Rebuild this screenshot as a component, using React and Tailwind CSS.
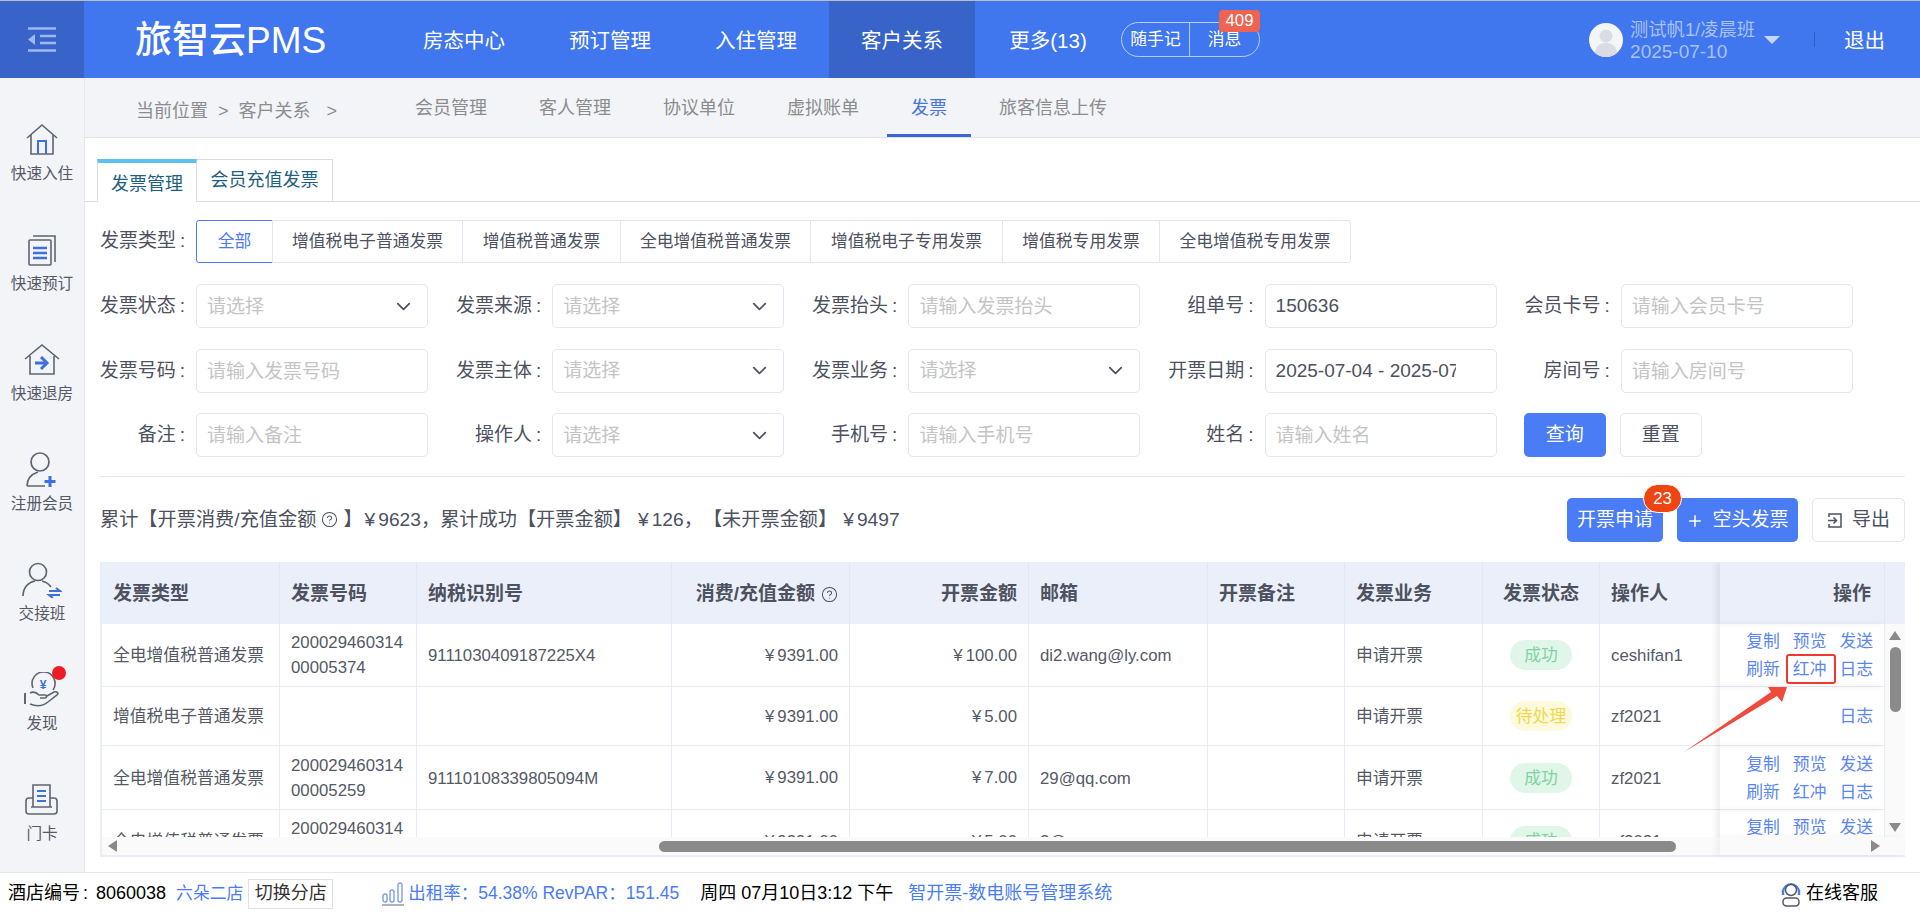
import React from 'react';
import { ChevronDown, CircleHelp, Plus } from 'lucide-react';

const navItems = ['房态中心', '预订管理', '入住管理', '客户关系', '更多(13)'];
const subItems = ['会员管理', '客人管理', '协议单位', '虚拟账单', '发票', '旅客信息上传'];
const typeItems = [
  ['全部', 'w-[77px]'],
  ['增值税电子普通发票', 'w-[191px]'],
  ['增值税普通发票', 'w-[159px]'],
  ['全电增值税普通发票', 'w-[191px]'],
  ['增值税电子专用发票', 'w-[193px]'],
  ['增值税专用发票', 'w-[158px]'],
  ['全电增值税专用发票', 'w-[192px]'],
];

const stroke = '#5f6472';
const blue = '#3f6fe0';

const HomeIcon = () => (
  <svg width="34" height="34" viewBox="0 0 34 34" fill="none" stroke={stroke} strokeWidth="1.6">
    <path d="M2 15 17 2l15 13M6 12v19h22V12" />
    <path d="M13 31V18h8v13" stroke={blue} strokeWidth="2" />
  </svg>
);

const BookIcon = () => (
  <svg width="34" height="34" viewBox="0 0 34 34" fill="none" stroke={stroke} strokeWidth="1.6">
    <path d="M8 3h22v26" />
    <rect x="4" y="7" width="22" height="25" rx="1" />
    <path d="M8 15h14M8 20h14M8 25h14" stroke={blue} strokeWidth="2.4" />
  </svg>
);

const CheckoutIcon = () => (
  <svg width="36" height="34" viewBox="0 0 36 34" fill="none" stroke={stroke} strokeWidth="1.6">
    <path d="M1 16 18 2l17 14M6 13v18h24V13" />
    <path d="M11 20h11" stroke={blue} strokeWidth="3" />
    <path d="M17 14l6 6-6 6" stroke={blue} strokeWidth="3" />
  </svg>
);

const MemberIcon = () => (
  <svg width="34" height="36" viewBox="0 0 34 36" fill="none" stroke={stroke} strokeWidth="1.7">
    <circle cx="15" cy="10" r="9" />
    <path d="M2 34c0-8 5-12 11-14M2 34h18" />
    <path d="M25 24v11M19.500 29.500h11" stroke={blue} strokeWidth="3" />
  </svg>
);

const ShiftIcon = () => (
  <svg width="40" height="36" viewBox="0 0 40 36" fill="none" stroke={stroke} strokeWidth="1.7">
    <circle cx="16" cy="10" r="8.500" />
    <path d="M1 34c0-9 6-14 12-15M20 19c4 1 7 3 9 6" />
    <path d="M27 29h11l-4-3M38 33H27l4 3" stroke={blue} strokeWidth="2" />
  </svg>
);

const FindIcon = () => (
  <svg width="36" height="36" viewBox="0 0 36 36" fill="none" stroke={stroke} strokeWidth="1.6">
    <path d="M9 16a11.500 11.500 0 1 1 20 2" />
    <text x="19" y="17" fontSize="12" fontWeight="700" fill={blue} stroke="none" textAnchor="middle">¥</text>
    <path d="M1 21v11" strokeWidth="2" />
    <path d="M6 21c4-2 7 0 9 2h6c2 0 2 3 0 3h-5M6 32c7 3 13 2 18-2l9-7c2-2 0-4-3-3l-7 4" />
  </svg>
);

const CardIcon = () => (
  <svg width="34" height="34" viewBox="0 0 34 34" fill="none" stroke={stroke} strokeWidth="1.6">
    <path d="M8 24V2h17v22" />
    <path d="M12 8h9M12 13h9M12 18h9" stroke={blue} strokeWidth="1.800" />
    <path d="M8 15H4a3 3 0 0 0-3 3v10a3 3 0 0 0 3 3h25a3 3 0 0 0 3-3V18a3 3 0 0 0-3-3h-4M6 24h21" />
  </svg>
);

const sideItems = [
  ['快速入住', HomeIcon],
  ['快速预订', BookIcon],
  ['快速退房', CheckoutIcon],
  ['注册会员', MemberIcon],
  ['交接班', ShiftIcon],
  ['发现', FindIcon],
  ['门卡', CardIcon],
];

const Yuan = () => <span className="mr-[3px]">¥</span>;

const Select = () => (
  <div className="h-[44px] w-[232px] flex items-center justify-between pl-[10px] pr-[12px] border border-[#e3e5ef] rounded-[5px] bg-white">
    <span className="pt-[2px] text-[19px] text-[#c4c4c4]">请选择</span>
    <ChevronDown size={23} strokeWidth={1.800} className="text-[#4d5160]" />
  </div>
);

const Input = ({ placeholder, value }) => (
  <input
    readOnly
    placeholder={placeholder}
    value={value || ''}
    className={`h-[44px] w-[232px] pl-[10px] border border-[#e3e5ef] rounded-[5px] bg-white text-[19px] text-[#4d5160] placeholder:text-[#c4c4c4] outline-none ${value ? 'pr-[40px] text-[18px]' : 'pr-[11px] pt-[2px]'}`}
  />
);

const Field = ({ label, children }) => (
  <div className="flex items-center">
    <label className="w-[89px] mr-[11px] pt-[1px] text-right text-[19px] text-[#4d5160] whitespace-nowrap">
      {label}
      <span className="ml-[4px]">:</span>
    </label>
    {children}
  </div>
);

const colWidths = [178, 137, 255, 178, 179, 179, 137, 138, 117, 120, 165];
const cell = 'border-r border-b border-[#e8ebf6] px-[11px] text-[16.800px] text-[#555966]';
const th = 'border-r border-[#e3e7f5] px-[11px] pt-[2px] bg-[#ebeffa] text-[19px] font-bold text-[#4d5160]';

const rows = [
  { h: 'h-[63px]', type: '全电增值税普通发票', no: ['200029460314', '00005374'], tax: '9111030409187225X4', amount: '100.00', mail: 'di2.wang@ly.com', status: 'ok', user: 'ceshifan1', red: true },
  { h: 'h-[59px]', type: '增值税电子普通发票', no: [], tax: '', amount: '5.00', mail: '', status: 'wait', user: 'zf2021', logOnly: true },
  { h: 'h-[64px]', type: '全电增值税普通发票', no: ['200029460314', '00005259'], tax: '91110108339805094M', amount: '7.00', mail: '29@qq.com', status: 'ok', user: 'zf2021' },
  { h: 'h-[63px]', type: '全电增值税普通发票', no: ['200029460314', '00005258'], tax: '', amount: '5.00', mail: '2@qq.com', status: 'ok', user: 'zf2021' },
];

const Ops = ({ row }) => {
  if (row.logOnly) return <div className="text-right text-[#5a86f5]">日志</div>;
  return (
    <div className="flex flex-wrap justify-end gap-x-[13px] leading-[28px] text-[#5a86f5]">
      <span>复制</span>
      <span>预览</span>
      <span>发送</span>
      <span>刷新</span>
      <span className="relative">
        红冲
        {row.red && <span className="absolute -left-[7px] -right-[10px] -top-[2px] bottom-0 border-2 border-[#ee3a2e] rounded-[3px]" />}
      </span>
      <span>日志</span>
    </div>
  );
};

const InvoiceTable = () => (
  <div className="relative w-[1805px] mt-[20px] border-l-2 border-b-2 border-[#e9edf8]">
    <div className="flex">
      <div className="h-[275px] w-[1783px] overflow-hidden">
        <table className="table-fixed w-[1783px] border-separate border-spacing-0">
          <colgroup>
            {colWidths.map((w, i) => (
              <col key={i} style={{ width: w }} />
            ))}
          </colgroup>
          <thead>
            <tr className="h-[62px]">
              <th className={`${th} text-left`}>发票类型</th>
              <th className={`${th} text-left`}>发票号码</th>
              <th className={`${th} text-left`}>纳税识别号</th>
              <th className={`${th} text-right`}>
                <span className="inline-flex items-center gap-[6px] whitespace-nowrap">
                  消费/充值金额
                  <CircleHelp size={17} strokeWidth={1.500} />
                </span>
              </th>
              <th className={`${th} text-right`}>开票金额</th>
              <th className={`${th} text-left`}>邮箱</th>
              <th className={`${th} text-left`}>开票备注</th>
              <th className={`${th} text-left`}>发票业务</th>
              <th className={`${th} text-center`}>发票状态</th>
              <th className={`${th} text-left border-r-0`}>操作人</th>
              <th className={`${th} text-right pr-[13px] shadow-[-4px_0_6px_rgba(0,0,0,0.07)]`}>操作</th>
            </tr>
          </thead>
          <tbody>
            {rows.map((row, i) => (
              <tr key={i} className={row.h}>
                <td className={`${cell} pt-[2px]`}>{row.type}</td>
                <td className={`${cell} leading-[25px]`}>
                  {row.no.map((n) => (
                    <div key={n}>{n}</div>
                  ))}
                </td>
                <td className={`${cell} pt-[2px]`}>{row.tax}</td>
                <td className={`${cell} pt-[1px] text-right`}><Yuan />9391.00</td>
                <td className={`${cell} pt-[1px] text-right`}><Yuan />{row.amount}</td>
                <td className={`${cell} pt-[2px]`}>{row.mail}</td>
                <td className={cell}></td>
                <td className={`${cell} pt-[2px]`}>申请开票</td>
                <td className={`${cell} text-center px-[0px]`}>
                  {row.status === 'ok' ? (
                    <span className="inline-block w-[62px] h-[30px] leading-[32px] rounded-full bg-[#dff6e8] text-[#7fd3a2]">成功</span>
                  ) : (
                    <span className="inline-block w-[62px] h-[30px] leading-[32px] rounded-full bg-[#fdf9dc] text-[#f0d94c] whitespace-nowrap">待处理</span>
                  )}
                </td>
                <td className={`${cell} pt-[2px] border-r-0`}>{row.user}</td>
                <td className={`${cell} pl-[0px] pr-[11px] pt-[2px] shadow-[-4px_0_6px_rgba(0,0,0,0.07)]`}>
                  <Ops row={row} />
                </td>
              </tr>
            ))}
          </tbody>
        </table>
      </div>
      {/* vertical scrollbar */}
      <div className="w-[20px] h-[275px] flex flex-col">
        <div className="h-[62px] bg-[#ebeffa] shrink-0" />
        <div className="flex-1 bg-[#fafafa] flex flex-col items-center pt-[7px]">
          <span className="w-0 h-0 border-x-[6px] border-x-transparent border-b-[9px] border-b-[#8a8a8a]" />
          <span className="w-[11px] h-[65px] mt-[7px] rounded-full bg-[#8a8a8a]" />
          <span className="w-0 h-0 mt-auto mb-[5px] border-x-[6px] border-x-transparent border-t-[9px] border-t-[#8a8a8a]" />
        </div>
      </div>
    </div>
    {/* horizontal scrollbar */}
    <div className="flex h-[18px] w-[1803px] bg-[#fafafa]">
      <div className="w-[1618px] flex items-center pl-[6px] relative">
        <span className="w-0 h-0 border-y-[6px] border-y-transparent border-r-[9px] border-r-[#8a8a8a]" />
        <span className="h-[11px] w-[1017px] ml-[542px] rounded-full bg-[#8a8a8a]" />
      </div>
      <div className="w-[185px] flex items-center justify-end pr-[25px] shadow-[-4px_0_6px_rgba(0,0,0,0.05)]">
        <span className="w-0 h-0 border-y-[6px] border-y-transparent border-l-[9px] border-l-[#8a8a8a]" />
      </div>
    </div>
    {/* annotation arrow */}
    <svg className="absolute left-[1582px] top-[125px]" width="104" height="66" viewBox="0 0 104 66">
      <polygon points="0,65 87,5 84,0 103,0 98,15 93,9" fill="#f04a3c" />
    </svg>
  </div>
);

export default function App() {
  return (
    <div
      className="w-[1920px] h-[912px] overflow-hidden flex flex-col bg-white"
      style={{ fontFamily: '"Liberation Sans", "Noto Sans CJK SC", sans-serif' }}
    >
      {/* header */}
      <header className="h-[78px] shrink-0 flex items-stretch bg-[#4076ee] border-t border-[#b9bcc2] text-white">
        <div className="w-[84px] flex items-center justify-center bg-[#3863c8]">
          <svg width="28" height="25" viewBox="0 0 28 25" fill="none" stroke="#9db8f2" strokeWidth="2.400">
            <path d="M0 1.500h28M12 9h16M12 16h16M0 23.500h28" />
            <path d="M7 7v11l-7-5.500z" fill="#9db8f2" stroke="none" />
          </svg>
        </div>
        <div className="w-[307px] pl-[51px] pt-[2px] flex items-center text-[37px] font-medium whitespace-nowrap">旅智云PMS</div>
        <nav className="flex">
          {navItems.map((item) => (
            <a key={item} className={`w-[146px] pt-[4px] flex items-center justify-center text-[20.500px] whitespace-nowrap ${item === '客户关系' ? 'bg-[#3863c8]' : ''}`}>
              {item}
            </a>
          ))}
        </nav>
        <div className="flex items-center">
          <div className="relative flex w-[139px] h-[35px] border border-[#b9cdf8] rounded-full text-[16.800px]">
            <span className="w-[68px] flex items-center justify-center border-r border-[#b9cdf8]">随手记</span>
            <span className="flex-1 flex items-center justify-center">消息</span>
            <span className="absolute left-[97px] -top-[13px] w-[41px] h-[22px] flex items-center justify-center rounded-[4px] bg-[#ee6450] text-[16.800px]">409</span>
          </div>
        </div>
        <div className="ml-auto flex items-center">
          <svg width="34" height="34" viewBox="0 0 34 34">
            <circle cx="17" cy="17" r="17" fill="#f4f5f7" />
            <circle cx="17" cy="13" r="6.500" fill="#d9dce2" />
            <path d="M6 30c1-8 6-10 11-10s10 2 11 10a17 17 0 0 1-22 0z" fill="#d9dce2" />
          </svg>
          <div className="ml-[7px] pt-[2px] leading-[22px] text-[#a9c1f5] whitespace-nowrap">
            <div className="text-[18.300px]">测试帆1/凌晨班</div>
            <div className="text-[19px]">2025-07-10</div>
          </div>
          <span className="ml-[9px] w-0 h-0 border-x-[8px] border-x-transparent border-t-[8px] border-t-[#c8d7f8]" />
          <span className="ml-[34px] w-px h-[15px] bg-[#2f5bc4]" />
          <a className="ml-[29px] mr-[35px] pt-[4px] text-[20.500px]">退出</a>
        </div>
      </header>

      <div className="flex-1 flex min-h-0">
        {/* side bar */}
        <aside className="w-[85px] shrink-0 pt-[44px] bg-[#f2f4f8] border-r border-[#e4e7ee] overflow-hidden">
          {sideItems.map(([label, Icon]) => (
            <div key={label} className="relative h-[110px] flex flex-col items-center text-[#555966]">
              <div className="h-[36px] flex items-center justify-center">
                <Icon />
              </div>
              <span className="mt-[6px] h-[20px] leading-[20px] text-[15.600px] whitespace-nowrap">{label}</span>
              {label === '发现' && <span className="absolute left-[52px] top-[-6px] w-[14px] h-[14px] rounded-full bg-[#ee1c25]" />}
            </div>
          ))}
        </aside>

        <main className="flex-1 min-w-0 overflow-hidden">
          {/* sub nav */}
          <div className="h-[60px] flex bg-[#f2f4f8] border-b border-[#e0e3e8] text-[18px] text-[#8c8c8c]">
            <div className="w-[306px] pl-[51px] pt-[22px] leading-[22px] whitespace-nowrap">
              当前位置
              <span className="mx-[10px]">&gt;</span>
              客户关系
              <span className="ml-[16px]">&gt;</span>
            </div>
            <div className="flex gap-[4px]">
              {subItems.map((item) => (
                <a
                  key={item}
                  className={`h-[59px] px-[24px] pt-[19px] leading-[22px] whitespace-nowrap ${item === '发票' ? 'text-[#4a74e0] border-b-[3px] border-[#3c66d5]' : ''}`}
                >
                  {item}
                </a>
              ))}
            </div>
          </div>

          {/* tabs */}
          <div className="h-[43px] mt-[21px] pl-[12px] flex items-end border-b border-[#d8dbe0] text-[18px] text-[#1f5f80]">
            <div className="w-[100px] h-[43px] -mb-px flex items-center justify-center pt-[4px] bg-white border-t-4 border-t-[#5cc3f0] border-x border-x-[#d8dbe0]">发票管理</div>
            <div className="w-[136px] h-[42px] flex items-center justify-center border-t border-r border-[#d8dbe0]">会员充值发票</div>
          </div>

          <div className="pl-[15px]">
            {/* invoice type */}
            <div className="mt-[18px] flex items-center">
              <label className="w-[96px] text-[19px] text-[#4d5160] whitespace-nowrap">
                发票类型
                <span className="ml-[4px]">:</span>
              </label>
              <div className="flex h-[43px]">
                {typeItems.map(([item, w], i) => (
                  <button
                    key={item}
                    className={`${w} text-[16.800px] border whitespace-nowrap ${i === 0 ? 'rounded-l-[3px] border-[#4a7cf6] text-[#4a7cf6]' : '-ml-px border-[#e3e5ef] text-[#4d5160]'} ${i === typeItems.length - 1 ? 'rounded-r-[3px]' : ''}`}
                  >
                    {item}
                  </button>
                ))}
              </div>
            </div>

            {/* filters */}
            <div className="mt-[21px] -ml-[4px] grid grid-cols-[repeat(5,332px)] gap-x-[24.200px] gap-y-[20.500px]">
              <Field label="发票状态"><Select /></Field>
              <Field label="发票来源"><Select /></Field>
              <Field label="发票抬头"><Input placeholder="请输入发票抬头" /></Field>
              <Field label="组单号"><Input value="150636" /></Field>
              <Field label="会员卡号"><Input placeholder="请输入会员卡号" /></Field>
              <Field label="发票号码"><Input placeholder="请输入发票号码" /></Field>
              <Field label="发票主体"><Select /></Field>
              <Field label="发票业务"><Select /></Field>
              <Field label="开票日期"><Input value="2025-07-04 - 2025-07-10" /></Field>
              <Field label="房间号"><Input placeholder="请输入房间号" /></Field>
              <Field label="备注"><Input placeholder="请输入备注" /></Field>
              <Field label="操作人"><Select /></Field>
              <Field label="手机号"><Input placeholder="请输入手机号" /></Field>
              <Field label="姓名"><Input placeholder="请输入姓名" /></Field>
              <div className="flex gap-[14px] pl-[3px]">
                <button className="w-[82px] h-[44px] pt-[1px] rounded-[5px] bg-[#4a7cf6] text-white text-[19px]">查询</button>
                <button className="w-[82px] h-[44px] pt-[1px] rounded-[5px] border border-[#e3e5ef] text-[#4d5160] text-[19px]">重置</button>
              </div>
            </div>

            <div className="mt-[19px] w-[1805px] border-t border-[#e4e7f0]" />

            {/* summary */}
            <div className="mt-[21px] w-[1805px] h-[44px] flex items-center justify-between">
              <div className="flex items-center text-[19.200px] text-[#4d5160] whitespace-nowrap [text-spacing-trim:space-all]">
                累计【开票消费/充值金额
                <CircleHelp size={17} strokeWidth={1.500} className="mx-[5px]" />
                】
                <span className="ml-[2px]"><Yuan />9623，累计成功【开票金额】</span>
                <span className="ml-[6px]"><Yuan />126，【未开票金额】</span>
                <span className="ml-[6px]"><Yuan />9497</span>
              </div>
              <div className="flex gap-[14px] text-[19px]">
                <button className="relative w-[96px] h-[44px] pt-[1px] rounded-[5px] bg-[#4a7cf6] text-white whitespace-nowrap">
                  开票申请
                  <span className="absolute left-[76px] -top-[14px] w-[39px] h-[29px] flex items-center justify-center rounded-full bg-[#ee4512] border border-white text-[16.800px]">23</span>
                </button>
                <button className="w-[121px] h-[44px] pt-[1px] rounded-[5px] bg-[#4a7cf6] text-white flex items-center justify-center gap-[8px] whitespace-nowrap">
                  <Plus size={18} strokeWidth={2} />
                  空头发票
                </button>
                <button className="w-[93px] h-[44px] pt-[1px] rounded-[5px] border border-[#e3e5ef] text-[#4d5160] flex items-center justify-center gap-[9px] whitespace-nowrap">
                  <svg width="16" height="17" viewBox="0 0 16 17" fill="none" stroke="#4d5160" strokeWidth="1.500">
                    <path d="M2 5V2h12v13H2v-3" />
                    <path d="M1 8.500h8M6.500 5.500l3 3-3 3" />
                  </svg>
                  导出
                </button>
              </div>
            </div>

            <InvoiceTable />
          </div>
        </main>
      </div>

      {/* footer */}
      <footer className="h-[40px] shrink-0 flex items-center pl-[8px] pt-[2px] border-t border-[#e4e7f0] text-[18px] text-black whitespace-nowrap">
        <span>酒店编号<span className="ml-[3px] mr-[8px]">:</span>8060038</span>
        <span className="ml-[10px] text-[16.800px] text-[#4a7cf6]">六朵二店</span>
        <button className="ml-[5px] w-[85px] h-[30px] border border-[#e0e0e0] text-[18px] text-[#333]">切换分店</button>
        <svg className="ml-[49px]" width="22" height="24" viewBox="0 0 22 24" fill="none" stroke="#7f9fe6" strokeWidth="1.400">
          <rect x="1" y="12" width="4" height="8" rx="2" />
          <rect x="8" y="8" width="4" height="12" rx="2" />
          <rect x="16" y="1" width="4" height="19" rx="2" />
          <path d="M0 23h22" stroke="#9aa0ad" strokeWidth="1.600" />
        </svg>
        <span className="ml-[4px] text-[17.500px] text-[#4a7cf6]">出租率：54.38% RevPAR：151.45</span>
        <span className="ml-[21px]">周四 07月10日3:12 下午</span>
        <span className="ml-[15px] text-[#4a7cf6]">智开票-数电账号管理系统</span>
        <div className="ml-auto mr-[42px] flex items-center gap-[5px]">
          <svg width="20" height="26" viewBox="0 0 20 26" fill="none" stroke="#555966" strokeWidth="1.500">
            <path d="M2 11a8 8 0 0 1 16 0" stroke="#4a7cf6" strokeWidth="2" />
            <circle cx="10" cy="9" r="5.500" />
            <path d="M2 9v5M18 9v5" stroke="#4a7cf6" strokeWidth="2.400" />
            <rect x="2" y="17" width="16" height="8" rx="3.500" />
          </svg>
          <span>在线客服</span>
        </div>
      </footer>
    </div>
  );
}
